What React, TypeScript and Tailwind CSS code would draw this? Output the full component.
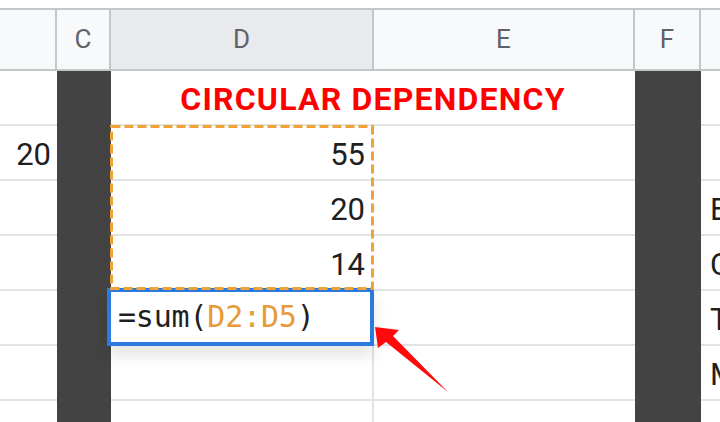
const font = { fontFamily: 'Roboto, "Liberation Sans", sans-serif' }

function HeaderCell({ w, label, selected, last }: { w: string; label?: string; selected?: boolean; last?: boolean }) {
  return (
    <div
      className={`${w} h-full flex items-center justify-center text-[26px] text-[#5f6368] ${
        last ? '' : 'border-r-2 border-[#c4c7c8]'
      } ${selected ? 'bg-[#e8eaed]' : 'bg-[#f8f9fa]'}`}
    >
      {label}
    </div>
  )
}

function Dark() {
  return <div className="h-full bg-[#434343]" />
}

function Row({ a, d, e, g, merged, dRight }: { a?: string; d?: React.ReactNode; e?: React.ReactNode; g?: string; merged?: React.ReactNode; dRight?: boolean }) {
  return (
    <div className="flex h-[55px] shrink-0">
      <div className="w-[57px] h-full border-b-2 border-[#e2e3e3] flex items-center justify-end pr-[6px] pt-[6px] text-[31px] text-[#1f1f1f]">
        {a}
      </div>
      <div className="w-[54px] h-full">
        <Dark />
      </div>
      {merged !== undefined ? (
        <div className="w-[524px] h-full border-b-2 border-[#e2e3e3] flex items-center justify-center pt-[2px]">
          {merged}
        </div>
      ) : (
        <>
          <div
            className={`relative w-[263px] h-full border-b-2 border-[#e2e3e3] flex items-center justify-end pr-[9px] pt-[6px] text-[31px] text-[#1f1f1f] ${
              dRight ? 'border-r-2' : ''
            }`}
          >
            {d}
          </div>
          <div className="w-[261px] h-full border-b-2 border-[#e2e3e3]">{e}</div>
        </>
      )}
      <div className="w-[66px] h-full">
        <Dark />
      </div>
      <div className="flex-1 h-full border-b-2 border-[#e2e3e3] flex items-center pl-[9px] pt-[6px] text-[31px] text-[#1f1f1f] overflow-hidden whitespace-nowrap">
        {g}
      </div>
    </div>
  )
}

function FormulaEditor() {
  return (
    <div className="absolute left-[-4px] top-[-3px] w-[267px] h-[58px] border-4 border-[#2b7bde] bg-white flex items-center pl-[7px] shadow-[0_10px_14px_rgba(0,0,0,0.10)] z-10">
      <span className="text-[30px] text-[#1f1f1f] leading-none tracking-[-0.2px]" style={{ fontFamily: '"DejaVu Sans Mono", "Liberation Mono", monospace' }}>
        =sum(<span className="text-[#e69a38]">D2:D5</span>)
      </span>
    </div>
  )
}

export default function App() {
  return (
    <div className="relative w-[720px] h-[422px] overflow-hidden bg-white flex flex-col" style={font}>
      <div className="h-[8px] shrink-0" />
      <div className="flex h-[63px] shrink-0 border-y-2 border-[#c4c7c8]">
        <HeaderCell w="w-[57px]" />
        <HeaderCell w="w-[54px]" label="C" />
        <HeaderCell w="w-[263px]" label="D" selected />
        <HeaderCell w="w-[261px]" label="E" />
        <HeaderCell w="w-[66px]" label="F" />
        <HeaderCell w="flex-1" last />
      </div>

      <Row merged={<span className="text-[32px] font-bold text-[#ff0000] tracking-[1.2px]">CIRCULAR DEPENDENCY</span>} />
      <Row a="20" d="55" />
      <Row d="20" g="B" />
      <Row d="14" g="C" />
      <Row d={<FormulaEditor />} dRight g="T" />
      <Row dRight g="M" />
      <Row dRight />

      {/* copy range + arrow */}
      <svg className="absolute left-0 top-0 pointer-events-none z-20" width="720" height="422" viewBox="0 0 720 422">
        <rect x="111.5" y="126.5" width="261" height="162" fill="none" stroke="#f0a234" strokeWidth="3" strokeDasharray="9 4" />
        <polygon points="375,327 399,330 393,336 448,392 386,342 378,348" fill="#ff0a0a" />
      </svg>
    </div>
  )
}
